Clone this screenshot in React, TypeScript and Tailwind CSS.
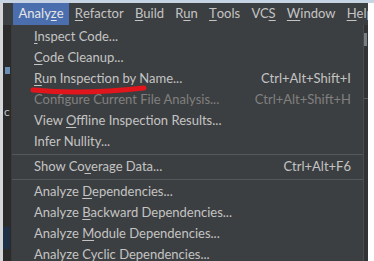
import React from 'react';

type Item = {
  pre: string;
  key?: string;
  post?: string;
  shortcut?: string;
  disabled?: boolean;
};

const font = { fontFamily: 'Lato, "Noto Sans", sans-serif' };

const topMenus: [string, string, string][] = [
  ['Analy', 'z', 'e'],
  ['', 'R', 'efactor'],
  ['', 'B', 'uild'],
  ['R', 'u', 'n'],
  ['', 'T', 'ools'],
  ['VC', 'S', ''],
  ['', 'W', 'indow'],
  ['', 'H', 'elp'],
];

const group1: Item[] = [
  { pre: '', key: 'I', post: 'nspect Code...' },
  { pre: '', key: 'C', post: 'ode Cleanup...' },
  { pre: '', key: 'R', post: 'un Inspection by Name...', shortcut: 'Ctrl+Alt+Shift+I' },
  { pre: 'Configure Current File Analysis...', shortcut: 'Ctrl+Alt+Shift+H', disabled: true },
  { pre: 'View ', key: 'O', post: 'ffline Inspection Results...' },
  { pre: 'Infer Nullity...' },
];

const group2: Item[] = [{ pre: 'Show Co', key: 'v', post: 'erage Data...', shortcut: 'Ctrl+Alt+F6' }];

const group3: Item[] = [
  { pre: 'Analyze ', key: 'D', post: 'ependencies...' },
  { pre: 'Analyze ', key: 'B', post: 'ackward Dependencies...' },
  { pre: 'Analyze ', key: 'M', post: 'odule Dependencies...' },
  { pre: 'Analyze ', key: 'C', post: 'yclic Dependencies...' },
];

function Row({ item }: { item: Item }) {
  return (
    <div
      className={`flex items-center justify-between h-[21px] shrink-0 pl-[22px] pr-[12px] text-[13px] ${
        item.disabled ? 'text-[#808080]' : 'text-[#c4c4c4]'
      }`}
    >
      <span className="whitespace-nowrap">
        {item.pre}
        {item.key && <span className="underline underline-offset-2">{item.key}</span>}
        {item.post}
      </span>
      {item.shortcut && <span className="whitespace-nowrap">{item.shortcut}</span>}
    </div>
  );
}

function Separator() {
  return <div className="h-[4px] shrink-0 flex items-center"><div className="h-px w-full bg-[#55585a]" /></div>;
}

export default function App() {
  return (
    <div className="relative w-[374px] h-[261px] overflow-hidden bg-white flex flex-col" style={font}>
      <div className="h-[3px] shrink-0 bg-[#c7d4e4]" />
      <div className="flex flex-1 min-h-0">
        <div className="w-[3px] bg-[#d4d6d8]" />
        <div className="w-[365px] flex flex-col bg-[#2b2b2b]">
          {/* menu bar */}
          <div className="h-[22px] shrink-0 bg-[#3c3f41] flex items-center pl-[10px] text-[13px] text-[#c4c4c4] whitespace-nowrap overflow-hidden">
            {topMenus.map(([a, k, b], i) => (
              <div
                key={i}
                className={`h-full flex items-center px-[5.6px] ${i === 0 ? 'bg-[#4b6eaf] text-[#e6e6e6]' : ''}`}
              >
                {a}
                <span className="underline underline-offset-2">{k}</span>
                {b}
              </div>
            ))}
          </div>
          <div className="flex flex-1 min-h-0">
            {/* editor gutter behind */}
            <div className="w-[9px] flex flex-col bg-[#2b2b2b] border-r border-[#3a3a3a]">
              <div className="h-[42px]" />
              <div className="ml-[2px] w-[5px] h-[7px] bg-[#6a8fb5]" />
              <div className="h-[32px]" />
              <div className="text-[12px] leading-none text-[#c4c4c4] pl-[1px]">c</div>
              <div className="flex-1" />
              <div className="w-[7px] h-[22px] bg-[#1f3147]" />
              <div className="h-[12px]" />
            </div>
            {/* dropdown */}
            <div className="w-[351px] bg-[#3c3f41] pt-[1px] flex flex-col overflow-hidden">
              {group1.map((it, i) => (
                <Row key={i} item={it} />
              ))}
              <Separator />
              {group2.map((it, i) => (
                <Row key={i} item={it} />
              ))}
              <Separator />
              {group3.map((it, i) => (
                <Row key={i} item={it} />
              ))}
            </div>
            {/* scrollbar area behind */}
            <div className="w-[5px] bg-[#313335] border-l border-[#4a4d4f] flex flex-col">
              <div className="h-[8px]" />
              <div className="w-[3px] h-[13px] bg-[#7a7d80]" />
              <div className="h-[52px]" />
              <div className="h-px bg-[#5a5d60]" />
            </div>
          </div>
        </div>
      </div>
      {/* red hand-drawn underline */}
      <svg className="absolute left-[30px] top-[85px]" width="118" height="10" viewBox="0 0 118 10">
        <path d="M3 5 C 30 7.5, 72 7.5, 114 3" stroke="#e0161c" strokeWidth="5" strokeLinecap="round" fill="none" />
      </svg>
    </div>
  );
}
